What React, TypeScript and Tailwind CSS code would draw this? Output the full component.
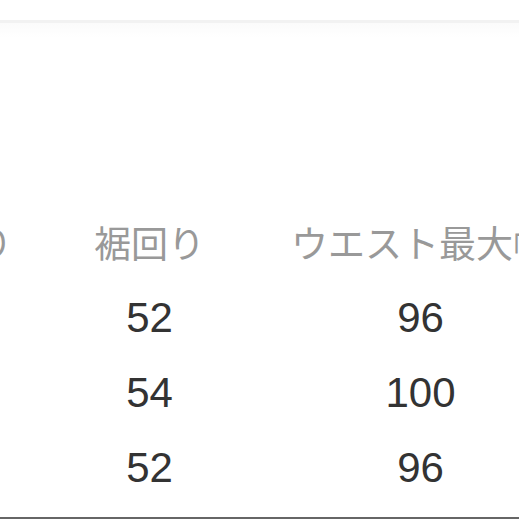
const rows = [
  { hem: '52', waist: '96' },
  { hem: '54', waist: '100' },
  { hem: '52', waist: '96' },
]

const jp = "font-['Hiragino_Sans','Noto_Sans_CJK_JP',sans-serif]"
const num = "font-['Liberation_Sans',Arial,sans-serif]"

export default function App(): JSX.Element {
  return (
    <div className="w-[519px] h-[519px] overflow-hidden bg-white flex flex-col">
      <div className="h-[20px] shrink-0" />
      <div className="h-[3px] shrink-0 bg-[#f2f2f2]" />
      <div className="h-[182px] shrink-0 bg-gradient-to-b from-[#fbfbfb] to-white to-[8%]" />

      <div className={`flex h-[75px] shrink-0 items-center ml-[-174px] text-[37px] leading-none text-[#999999] ${jp}`}>
        <div className="w-[188px] shrink-0 text-center whitespace-nowrap">太もも回り</div>
        <div className="w-[271px] shrink-0 text-center whitespace-nowrap">裾回り</div>
        <div className="w-[271px] shrink-0 text-center whitespace-nowrap">ウエスト最大幅</div>
      </div>

      {rows.map((row, i) => (
        <div
          key={i}
          className={`flex h-[75px] shrink-0 items-center ml-[-174px] text-[42px] leading-none text-[#333333] ${num}`}
        >
          <div className="w-[188px] shrink-0 text-center">33</div>
          <div className="w-[271px] shrink-0 text-center">{row.hem}</div>
          <div className="w-[271px] shrink-0 text-center">{row.waist}</div>
        </div>
      ))}

      <div className="flex-1" />
      <div className="h-[2px] shrink-0 bg-[#666666]" />
    </div>
  )
}
